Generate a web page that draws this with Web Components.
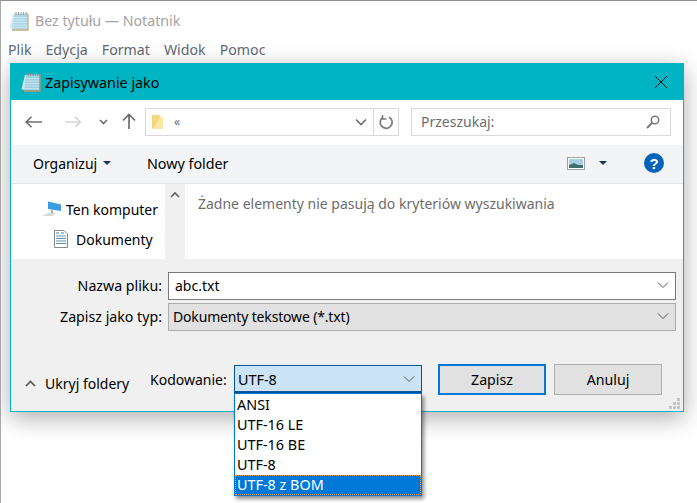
<!DOCTYPE html>
<html lang="pl">
<head>
<meta charset="utf-8">
<title>Bez tytułu — Notatnik</title>
<style>
  html, body { margin: 0; height: 100%; background: #fff; overflow: hidden; }
  body { font-family: 'Noto Sans', 'Open Sans', sans-serif; font-size: 14px; color: #000; }
</style>
</head>
<body>
<notepad-window>
  <save-dialog></save-dialog>
</notepad-window>

<script>
const NOTEPAD_SVG = `
  <svg width="20" height="20" viewBox="0 0 20 20">
    <path d="M4 3 L0.5 17 L5 19 L8 3 Z" fill="#cfe9f2"/>
    <path d="M5.5 2.5 H18.5 V18.5 H3 Z" fill="#9fd0e2"/>
    <path d="M5 6.5h13M4.6 9h13.4M4.2 11.5h13.8M3.8 14h14.2M3.4 16.5h14.6" stroke="#c4e3ee" stroke-width="1"/>
    <path d="M19 2.5V19H3" fill="none" stroke="#b39a72" stroke-width="1.3"/>
    <path d="M7 1v3M9.5 1v3M12 1v3M14.5 1v3M17 1v3" stroke="#8d8d8d" stroke-width="1"/>
  </svg>`;

class NotepadWindow extends HTMLElement {
  constructor() {
    super();
    const shadow = this.attachShadow({ mode: 'open' });
    shadow.innerHTML = `
      <style>
        :host {
          display: block;
          position: relative;
          height: 503px;
          box-sizing: border-box;
          border-left: 1px solid #a9a9a9;
          border-top: 1px solid #8f8f8f;
          background: #fff;
          overflow: hidden;
        }
        .title {
          display: flex;
          align-items: center;
          gap: 6px;
          height: 39px;
          padding-left: 8px;
          color: #a3a3a3;
          font-size: 14.2px;
        }
        .title svg { opacity: .85; }
        .menu {
          display: flex;
          gap: 14px;
          height: 22px;
          padding: 0 0 4px 7px;
          box-sizing: border-box;
          align-items: center;
          color: #5f6b76;
          font-size: 14.2px;
        }
      </style>
      <div class="title">${NOTEPAD_SVG}<span>Bez tytułu — Notatnik</span></div>
      <div class="menu"><span>Plik</span><span>Edycja</span><span>Format</span><span>Widok</span><span>Pomoc</span></div>
      <slot></slot>
    `;
  }
}
customElements.define('notepad-window', NotepadWindow);

class ComboBox extends HTMLElement {
  constructor() {
    super();
    const shadow = this.attachShadow({ mode: 'open' });
    shadow.innerHTML = `
      <style>
        :host {
          display: flex;
          align-items: center;
          box-sizing: border-box;
          height: 28px;
          padding: 0 6px 2px 6px;
          border: 1px solid #7a7a7a;
          background: #fff;
          font-size: 14px;
          color: #000;
        }
        :host([variant="gray"]) { background: #e1e1e1; border: 1px solid #adadad; padding-left: 4px; }
        :host([variant="open"]) { background: #cce4f7; border: 2px solid #005499; border-width: 1px 1px 2px 1px; padding: 1px 6px 0 3px; font-size: 14.4px; }
        span { flex: 1; white-space: nowrap; }
        svg { flex: none; }
      </style>
      <span><slot></slot></span>
      <svg width="12" height="8" viewBox="0 0 12 8"><path d="M1 1.5 L6 6.5 L11 1.5" fill="none" stroke="#555" stroke-width="1"/></svg>
    `;
  }
}
customElements.define('combo-box', ComboBox);

class DialogButton extends HTMLElement {
  constructor() {
    super();
    const shadow = this.attachShadow({ mode: 'open' });
    shadow.innerHTML = `
      <style>
        :host {
          display: flex;
          align-items: center;
          justify-content: center;
          box-sizing: border-box;
          width: 108px;
          height: 31px;
          background: #e1e1e1;
          border: 1px solid #adadad;
          font-size: 14.2px;
        }
        :host([primary]) { border: 2px solid #0078d7; }
      </style>
      <slot></slot>
    `;
  }
}
customElements.define('dialog-button', DialogButton);

class EncodingList extends HTMLElement {
  constructor() {
    super();
    const shadow = this.attachShadow({ mode: 'open' });
    const items = ['ANSI', 'UTF-16 LE', 'UTF-16 BE', 'UTF-8', 'UTF-8 z BOM'];
    shadow.innerHTML = `
      <style>
        :host {
          display: block;
          position: absolute;
          left: 223px;
          top: 329px;
          width: 188px;
          box-sizing: border-box;
          border: 1px solid #0078d7;
          background: #fff;
          box-shadow: 2px 3px 4px rgba(0,0,0,.45);
          font-size: 14.4px;
          padding-top: 1px;
        }
        div { height: 20px; line-height: 20px; padding-left: 2px; }
        .sel { background: #0078d7; color: #fff; outline: 1px dotted #e8a040; outline-offset: -1px; }
      </style>
      ${items.map(t => `<div class="${t === 'UTF-8 z BOM' ? 'sel' : ''}">${t}</div>`).join('')}
    `;
  }
}
customElements.define('encoding-list', EncodingList);

class SaveDialog extends HTMLElement {
  constructor() {
    super();
    const shadow = this.attachShadow({ mode: 'open' });
    shadow.innerHTML = `
      <style>
        :host {
          display: flex;
          flex-direction: column;
          position: absolute;
          left: 9px;
          top: 62px;
          width: 674px;
          height: 349px;
          box-sizing: border-box;
          border: 1px solid #00b4c4;
          background: #f0f0f0;
          box-shadow: 0 6px 22px rgba(0,0,0,.32);
          font-size: 14px;
          color: #000;
        }
        .title {
          display: flex;
          align-items: center;
          height: 36px;
          flex: none;
          background: #00b4c4;
          padding: 0 15px 0 10px;
          gap: 4px;
          font-size: 14.3px;
        }
        .title span { flex: 1; }
        .nav {
          display: flex;
          align-items: center;
          height: 45px;
          flex: none;
          background: #fff;
          padding: 0 13px 2px 14px;
          box-sizing: border-box;
        }
        .nav-btns { display: flex; align-items: center; width: 120px; flex: none; }
        .nav-btns svg { display: block; }
        .address {
          display: flex;
          align-items: center;
          width: 254px;
          height: 28px;
          box-sizing: border-box;
          border: 1px solid #d9d9d9;
          color: #666;
          flex: none;
        }
        .address .path { flex: 1; display: flex; align-items: center; gap: 10px; padding-left: 5px; font-size: 12px; }
        .address .refresh { width: 24px; height: 26px; border-left: 1px solid #d9d9d9; display: flex; align-items: center; justify-content: center; }
        .search {
          display: flex;
          align-items: center;
          justify-content: space-between;
          width: 260px;
          height: 28px;
          margin-left: 12px;
          box-sizing: border-box;
          border: 1px solid #d9d9d9;
          padding: 0 10px 0 9px;
          color: #6d6d6d;
          flex: none;
        }
        .tools {
          display: flex;
          align-items: center;
          height: 39px;
          flex: none;
          box-sizing: border-box;
          background: #f3f4f6;
          border-bottom: 1px solid #e6e6e6;
          padding: 0 19px 2px 22px;
        }
        .tools .org { display: flex; align-items: center; gap: 6px; width: 114px; }
        .tools .new { font-size: 14.3px; }
        .tools .spacer { flex: 1; }
        .body { display: flex; height: 75px; flex: none; background: #fff; }
        .tree { width: 154px; display: flex; flex-direction: column; flex: none; }
        .tree div { display: flex; align-items: center; height: 30px; gap: 4px; }
        .tree .pc { margin-top: 10px; padding-left: 30px; }
        .tree .docs { padding-left: 43px; gap: 8px; }
        .scroll { width: 20px; background: #f0f0f0; flex: none; display: flex; justify-content: center; padding-top: 8px; box-sizing: border-box; }
        .empty { flex: 1; margin-left: 2px; padding: 10px 0 0 10px; border-left: 1px solid #f4f4f4; color: #6d6d6d; white-space: nowrap; }
        .form { display: grid; grid-template-columns: 157px 1fr; row-gap: 3px; padding: 13px 7px 0 0; align-items: center; flex: none; }
        .form label { text-align: right; padding: 0 6px 2px 0; font-size: 14.2px; }
        .form .type { letter-spacing: -0.16px; }
        .footer { display: flex; align-items: flex-start; padding-top: 33px; flex: none; position: relative; }
        .hide { display: flex; align-items: center; gap: 9px; padding: 10px 0 0 14px; width: 125px; flex: none; }
        .enc-label { width: 84px; flex: none; padding-top: 6px; box-sizing: border-box; }
        .enc { width: 188px; flex: none; margin-top: 1px; }
        .btns { display: flex; gap: 8px; margin-left: 16px; }
        .grip { position: absolute; right: 2px; bottom: 1px; }
      </style>
      <div class="title">${NOTEPAD_SVG}<span>Zapisywanie jako</span>
        <svg width="14" height="14" viewBox="0 0 14 14"><path d="M1 1 L13 13 M13 1 L1 13" stroke="#111" stroke-width="1"/></svg>
      </div>
      <div class="nav">
        <div class="nav-btns">
          <svg width="18" height="12" viewBox="0 0 18 12"><path d="M1 6h16M6.5 .8L1.2 6l5.3 5.2" fill="none" stroke="#6d6d6d" stroke-width="1.6"/></svg>
          <svg style="margin-left:21px" width="18" height="12" viewBox="0 0 18 12"><path d="M1 6h15M11 .8L16.3 6 11 11.2" fill="none" stroke="#d4d4d4" stroke-width="1.6"/></svg>
          <svg style="margin-left:17px" width="9" height="6" viewBox="0 0 9 6"><path d="M1 1l3.5 3.5L8 1" fill="none" stroke="#6d6d6d" stroke-width="1.6"/></svg>
          <svg style="margin-left:14px" width="14" height="17" viewBox="0 0 14 17"><path d="M7 16V1.5M1 7.5l6-6 6 6" fill="none" stroke="#6d6d6d" stroke-width="1.7"/></svg>
        </div>
        <div class="address">
          <div class="path">
            <svg width="13" height="16" viewBox="0 0 13 16"><path d="M1 1h7l1 1v12H3L1 15z" fill="#f5d67e"/><path d="M9 3h3v12H2z" fill="#fbe6a2"/></svg>
            <span>«</span>
          </div>
          <svg width="12" height="8" viewBox="0 0 12 8" style="margin-right:6px"><path d="M1 1.5L6 6.5L11 1.5" fill="none" stroke="#6d6d6d" stroke-width="1.6"/></svg>
          <div class="refresh">
            <svg width="16" height="16" viewBox="0 0 16 16"><path d="M5.2 3.1A6 6 0 1 0 11 3" fill="none" stroke="#7f7f7f" stroke-width="1.8"/><path d="M4.5 1v4h4" fill="none" stroke="#7f7f7f" stroke-width="1.5"/></svg>
          </div>
        </div>
        <div class="search">
          <span>Przeszukaj:</span>
          <svg width="14" height="14" viewBox="0 0 14 14"><circle cx="9" cy="5" r="3.7" fill="none" stroke="#7a7a7a" stroke-width="1.6"/><path d="M6.2 7.8L1 13" stroke="#7a7a7a" stroke-width="2"/></svg>
        </div>
      </div>
      <div class="tools">
        <div class="org"><span>Organizuj</span><svg width="8" height="4" viewBox="0 0 8 4"><path d="M0 0h8L4 4z" fill="#1f3659"/></svg></div>
        <span class="new">Nowy folder</span>
        <div class="spacer"></div>
        <svg width="18" height="13" viewBox="0 0 18 13"><rect x=".5" y=".5" width="17" height="12" fill="#fff" stroke="#a0a0a0"/><rect x="2" y="2" width="14" height="9" fill="#a8cfe6"/><path d="M2 8l5-2 4 2 5 0v3H2z" fill="#3f6f70"/></svg>
        <svg style="margin-left:14px" width="8" height="4" viewBox="0 0 8 4"><path d="M0 0h8L4 4z" fill="#1f3659"/></svg>
        <svg style="margin-left:37px" width="20" height="20" viewBox="0 0 20 20"><circle cx="10" cy="10" r="10" fill="#0563b8"/><text x="10" y="15.5" text-anchor="middle" font-family="Liberation Sans" font-weight="700" font-size="15" fill="#fff">?</text></svg>
      </div>
      <div class="body">
        <div class="tree">
          <div class="pc">
            <svg width="21" height="16" viewBox="0 0 21 16"><path d="M7 .5l13 3v6.500l-13-2z" fill="#3a9be0"/><path d="M11 9v3" stroke="#b5b5b5" stroke-width="2"/><path d="M1 15l6-3h8l-4 3z" fill="#d8d8d8"/></svg>
            <span>Ten komputer</span>
          </div>
          <div class="docs">
            <svg width="14" height="18" viewBox="0 0 14 18"><path d="M.5 .5H10L13.500 4V17.500H.5z" fill="#fff" stroke="#8a8a8a"/><path d="M2 3h3M7 3h3" stroke="#3f7fb5"/><path d="M2 6h10M2 8.500h10M2 11h10M2 13.500h10" stroke="#5f8fb5"/></svg>
            <span>Dokumenty</span>
          </div>
        </div>
        <div class="scroll"><svg width="10" height="6" viewBox="0 0 10 6"><path d="M1 5l4-4 4 4" fill="none" stroke="#606060" stroke-width="1.7"/></svg></div>
        <div class="empty">Żadne elementy nie pasują do kryteriów wyszukiwania</div>
      </div>
      <div class="form">
        <label>Nazwa pliku:</label>
        <combo-box>abc.txt</combo-box>
        <label>Zapisz jako typ:</label>
        <combo-box class="type" variant="gray">Dokumenty tekstowe (*.txt)</combo-box>
      </div>
      <div class="footer">
        <div class="hide">
          <svg width="11" height="7" viewBox="0 0 11 7"><path d="M1 6l4.500-4.500L10 6" fill="none" stroke="#555" stroke-width="1.7"/></svg>
          <span>Ukryj foldery</span>
        </div>
        <div class="enc-label">Kodowanie:</div>
        <combo-box class="enc" variant="open">UTF-8</combo-box>
        <div class="btns">
          <dialog-button primary>Zapisz</dialog-button>
          <dialog-button>Anuluj</dialog-button>
        </div>
      </div>
      <svg class="grip" width="12" height="12" viewBox="0 0 12 12" fill="#c4c4c4"><rect x="8" y="0" width="3" height="3"/><rect x="4" y="4" width="3" height="3"/><rect x="8" y="4" width="3" height="3"/><rect x="0" y="8" width="3" height="3"/><rect x="4" y="8" width="3" height="3"/><rect x="8" y="8" width="3" height="3"/></svg>
      <encoding-list></encoding-list>
    `;
  }
}
customElements.define('save-dialog', SaveDialog);
</script>
</body>
</html>
